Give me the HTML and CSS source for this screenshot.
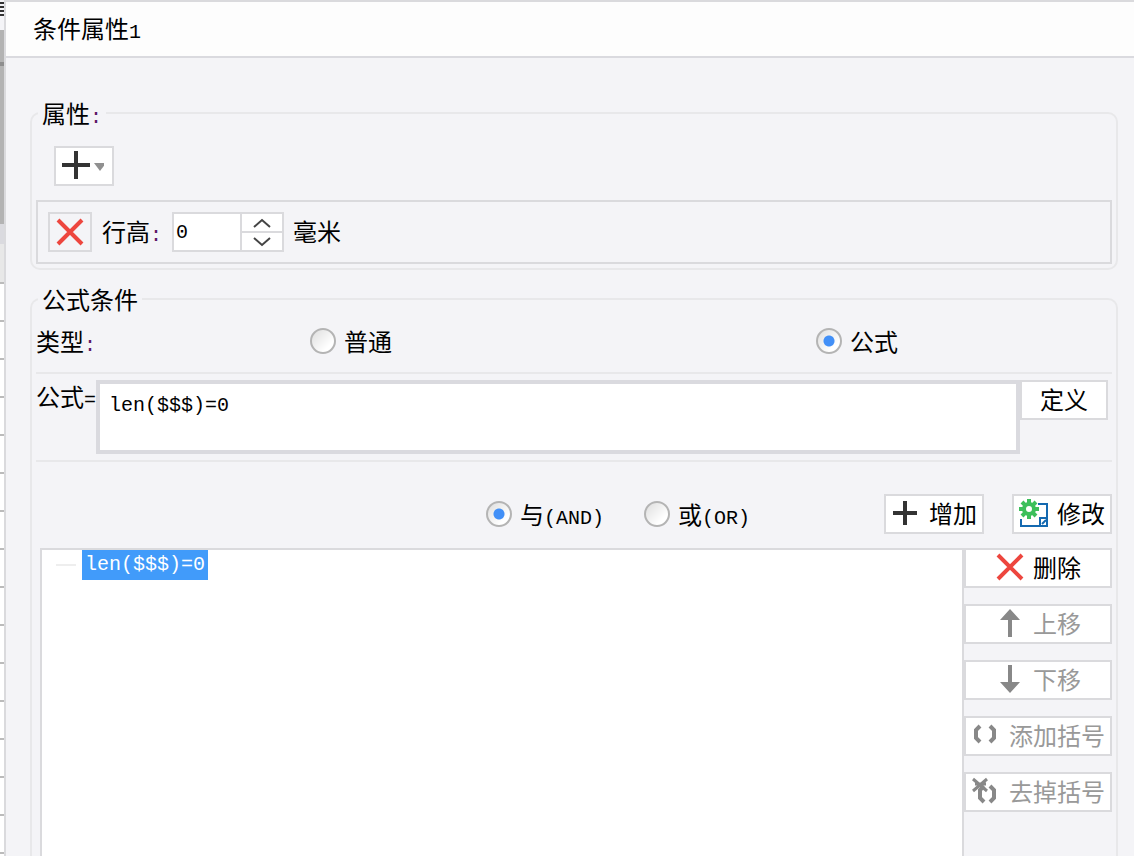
FILE: index.html
```html
<!DOCTYPE html>
<html lang="zh-CN">
<head>
<meta charset="utf-8">
<title>条件属性</title>
<link rel="stylesheet" href="styles.css">
</head>
<body>
<div class="sheet-edge">
  <div class="edge-menu"></div>
  <div class="edge-scroll"></div>
  <div class="edge-head"></div>
  <div class="edge-rows"></div>
</div>
<main class="dialog">
  <header class="title-bar"><h1 class="title">条件属性<span class="latin">1</span></h1></header>
  <div class="dialog-body">
    <fieldset class="group">
      <legend>属性<span class="latin colon">:</span></legend>
      <button class="btn add-menu" type="button" aria-label="添加属性">
        <svg width="48" height="28" viewBox="0 0 48 28"><path d="M6 14h28M20 0v28" fill="none" stroke="#333" stroke-width="4"/><path d="M38 12h12l-6 8z" fill="#909090"/></svg>
      </button>
      <div class="property-row">
        <button class="btn remove" type="button" aria-label="移除">
          <svg width="28" height="28" viewBox="0 0 28 28"><path d="M2 2l24 24M26 2L2 26" fill="none" stroke="#ed463e" stroke-width="4"/></svg>
        </button>
        <label class="height-label" for="row-height">行高<span class="latin colon">:</span></label>
        <div class="spinner">
          <input class="spin-input latin" id="row-height" type="number" value="0">
          <div class="spin-buttons">
            <button class="spin-btn" type="button" aria-label="增大"><svg width="18" height="10" viewBox="0 0 18 10"><path d="M1 9l8-7 8 7" fill="none" stroke="#444" stroke-width="2"/></svg></button>
            <button class="spin-btn" type="button" aria-label="减小"><svg width="18" height="10" viewBox="0 0 18 10"><path d="M1 1l8 7 8-7" fill="none" stroke="#444" stroke-width="2"/></svg></button>
          </div>
        </div>
        <span class="unit">毫米</span>
      </div>
    </fieldset>

    <fieldset class="group group-open">
      <legend>公式条件</legend>
      <div class="type-row">
        <span>类型<span class="latin colon">:</span></span>
        <label class="choice"><input class="radio" type="radio" name="kind">普通</label>
        <label class="choice"><input class="radio" type="radio" name="kind" checked>公式</label>
      </div>
      <div class="formula-row">
        <label class="formula-label" for="formula">公式<span class="latin">=</span></label>
        <textarea class="formula latin" id="formula" spellcheck="false">len($$$)=0</textarea>
        <button class="btn define" type="button">定义</button>
      </div>
      <div class="join-row">
        <div class="joins">
          <label class="choice"><input class="radio" type="radio" name="join" checked><span>与<span class="latin">(AND)</span></span></label>
          <label class="choice"><input class="radio" type="radio" name="join"><span>或<span class="latin">(OR)</span></span></label>
        </div>
        <div class="edit-actions">
          <button class="btn action" type="button">
            <svg width="30" height="30" viewBox="0 0 30 30"><path d="M2 15h24M14 3v24" fill="none" stroke="#333" stroke-width="4"/></svg>增加
          </button>
          <button class="btn action" type="button">
            <svg width="30" height="30" viewBox="0 0 30 30">
              <path d="M19 6h9v22H2v-7M21 28v-8h7" fill="none" stroke="#1469b0" stroke-width="2"/>
              <path d="M23 26l4-4" stroke="#1469b0" stroke-width="2"/>
              <circle cx="10" cy="11" r="5" fill="none" stroke="#3cbf5b" stroke-width="4"/>
              <path d="M10 1v4M10 17v4M0 11h4M16 11h4M3 4l3 3M14 15l3 3M17 4l-3 3M6 15l-3 3" fill="none" stroke="#3cbf5b" stroke-width="4"/>
            </svg>修改
          </button>
        </div>
      </div>
      <div class="conditions">
        <ul class="tree">
          <li class="tree-item"><span class="node latin">len($$$)=0</span></li>
        </ul>
        <div class="side-actions">
          <button class="btn action" type="button">
            <svg width="30" height="30" viewBox="0 0 30 30"><path d="M3 3l24 24M27 3L3 27" fill="none" stroke="#ed463e" stroke-width="4"/></svg>删除
          </button>
          <button class="btn action" type="button" disabled>
            <svg width="30" height="30" viewBox="0 0 30 30"><path d="M13 29V12H5L15 1l10 11h-8v17z" fill="#888"/></svg>上移
          </button>
          <button class="btn action" type="button" disabled>
            <svg width="30" height="30" viewBox="0 0 30 30"><path d="M13 1v17H5l10 11 10-11h-8V1z" fill="#888"/></svg>下移
          </button>
          <button class="btn action" type="button" disabled>
            <svg width="30" height="30" viewBox="0 0 30 30"><path d="M9 6L5 10v8l4 4M19 6l4 4v8l-4 4" fill="none" stroke="#888" stroke-width="4"/></svg>添加括号
          </button>
          <button class="btn action" type="button" disabled>
            <svg width="30" height="30" viewBox="0 0 30 30"><path d="M13 10l-4 4v8l4 4M19 10l4 4v8l-4 4" fill="none" stroke="#888" stroke-width="4"/><path d="M2 3l14 12M16 3L2 15M4 8h11" fill="none" stroke="#888" stroke-width="3"/></svg>去掉括号
          </button>
        </div>
      </div>
    </fieldset>
  </div>
</main>
</body>
</html>
```

FILE: styles.css
```css
* {
  box-sizing: border-box;
}

body {
  display: flex;
  height: 100vh;
  margin: 0;
  overflow: hidden;
  color: #000;
  background: #f4f4f7;
  font: 24px/32px "Noto Sans CJK SC", sans-serif;
}

button,
input,
textarea {
  margin: 0;
  color: inherit;
  font: inherit;
}

.latin {
  font-family: "Liberation Mono", monospace;
  font-size: 20px;
  line-height: 20px;
}

.colon {
  color: #5c1a66;
}

/* Strip of the worksheet left of the dialog */
.sheet-edge {
  display: flex;
  flex: 0 0 4px;
  flex-direction: column;
}

.edge-menu {
  height: 30px;
  background: linear-gradient(#333 0 2px, transparent 2px) 0 2px / 4px 4px repeat-y;
  border-bottom: 14px solid #f4f4f7;
}

.edge-scroll {
  height: 194px;
  background: linear-gradient(#b3b3b3 32px, #8e8e8e 32px 36px, #b3b3b3 36px);
}

.edge-head {
  height: 58px;
  background: #e8e8e8;
  border-top: 20px solid #dadadf;
}

.edge-rows {
  flex: 1;
  background: repeating-linear-gradient(#bbb 0 2px, #fff 2px 38px);
}

.dialog {
  display: flex;
  flex: 1;
  flex-direction: column;
  min-width: 0;
  border: solid #dadadd;
  border-width: 2px 0 0 2px;
}

.title-bar {
  padding: 10px 27px 12px;
  background: #fdfdfd;
  border-bottom: 2px solid #dadadf;
}

.title {
  margin: 0;
  font-size: 24px;
  font-weight: 400;
}

.dialog-body {
  display: flex;
  flex: 1;
  flex-direction: column;
  gap: 13px;
  min-height: 0;
  padding: 39px 16px 0 24px;
}

.group {
  min-width: 0;
  margin: 0;
  padding: 0 4px 4px;
  border: 2px solid #e8e8ea;
  border-radius: 10px;
}

.group-open {
  display: flex;
  flex: 1;
  flex-direction: column;
  min-height: 0;
  padding-bottom: 0;
  border-bottom: 0;
  border-radius: 10px 10px 0 0;
}

legend {
  margin-left: 2px;
  padding: 0 4px;
}

.btn {
  display: flex;
  align-items: center;
  justify-content: center;
  height: 40px;
  padding: 0 0 2px;
  background: #fff;
  border: 2px solid #dadadd;
  white-space: nowrap;
}

.btn svg {
  flex: none;
}

.btn:disabled {
  color: #999;
}

.add-menu {
  width: 60px;
  margin: 17px 18px 14px;
}

.add-menu svg {
  margin-right: 8px;
}

.property-row {
  display: flex;
  align-items: center;
  padding: 10px;
  border: 2px solid #dadadd;
}

.remove {
  width: 44px;
  padding: 0;
  background: #f4f4f7;
}

.height-label {
  width: 80px;
  padding-left: 10px;
}

.height-label,
.unit {
  padding-bottom: 2px;
}

.spinner {
  display: flex;
  width: 112px;
  height: 40px;
  border: 2px solid #dadadd;
}

.spin-input {
  flex: 1;
  min-width: 0;
  padding: 0 2px;
  background: #fff;
  border: 0;
  appearance: textfield;
}

.spin-input::-webkit-inner-spin-button {
  appearance: none;
}

.spin-buttons {
  display: grid;
  gap: 2px;
  width: 42px;
  background: #dadadd;
  border-left: 2px solid #dadadd;
}

.spin-btn {
  display: flex;
  align-items: center;
  justify-content: center;
  padding: 0;
  background: #fff;
  border: 0;
}

.unit {
  margin-left: 9px;
}

.type-row {
  display: grid;
  grid-template-columns: 274fr 506fr 296fr;
  align-items: center;
  padding: 10px 0 15px;
  border-bottom: 2px solid #e8e8ea;
}

.choice {
  display: flex;
  align-items: center;
  gap: 8px;
}

.radio {
  width: 26px;
  height: 26px;
  background: linear-gradient(135deg, #dedede, #fff 75%);
  border: 2px solid #b4b4b4;
  border-radius: 50%;
  appearance: none;
}

.radio:checked {
  background: radial-gradient(circle, #4290f7 5px, transparent 6px), linear-gradient(135deg, #dedede, #fff 75%);
}

.formula-row {
  display: flex;
  align-items: flex-start;
  padding: 6px 4px 6px 0;
  border-bottom: 2px solid #e8e8ea;
}

.formula-label {
  width: 60px;
  white-space: nowrap;
}

.formula {
  flex: 1;
  min-width: 0;
  height: 74px;
  padding: 12px 9px;
  background: #fff;
  border: 4px solid #dadadf;
  resize: none;
}

.define {
  width: 88px;
}

.join-row {
  display: flex;
  justify-content: flex-end;
  gap: 134px;
  padding: 32px 0 14px;
}

.joins {
  display: flex;
  gap: 40px;
}

.edit-actions {
  display: flex;
  gap: 28px;
}

.action {
  gap: 8px;
  min-width: 100px;
}

.conditions {
  display: flex;
  flex: 1;
  min-height: 0;
  padding-left: 4px;
}

.tree {
  flex: 1;
  margin: 0;
  padding: 0 14px;
  background: #fff;
  border: solid #dadadd;
  border-width: 2px 2px 0;
  list-style: none;
}

.tree-item {
  display: flex;
  align-items: center;
  gap: 6px;
}

.tree-item::before {
  width: 20px;
  height: 2px;
  background: #eee;
  content: "";
}

.node {
  padding: 0 3px;
  color: #fff;
  background: #419bfa;
  line-height: 30px;
}

.side-actions {
  display: flex;
  flex: 0 0 148px;
  flex-direction: column;
  gap: 16px;
}
```
